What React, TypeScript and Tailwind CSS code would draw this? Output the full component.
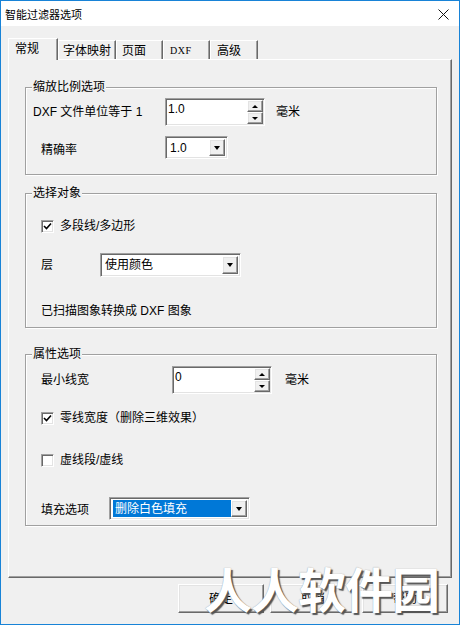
import React from "react";

const sunken =
  "bg-white border border-t-[#a0a0a0] border-l-[#a0a0a0] border-r-white border-b-white shadow-[inset_1px_1px_0_#696969,inset_-1px_-1px_0_#e3e3e3]";
const raised =
  "bg-[#f0f0f0] border border-t-white border-l-white border-r-[#696969] border-b-[#696969] shadow-[inset_-1px_-1px_0_#a0a0a0,inset_1px_1px_0_#e3e3e3]";

function DownTri() {
  return (
    <div className="w-0 h-0 border-l-[3.5px] border-r-[3.5px] border-t-[4px] border-l-transparent border-r-transparent border-t-black" />
  );
}
function UpTri() {
  return (
    <div className="w-0 h-0 border-l-[3px] border-r-[3px] border-b-[3px] border-l-transparent border-r-transparent border-b-black" />
  );
}
function SmallDownTri() {
  return (
    <div className="w-0 h-0 border-l-[3px] border-r-[3px] border-t-[3px] border-l-transparent border-r-transparent border-t-black" />
  );
}

function Spin({ value, w }: { value: string; w: string }) {
  return (
    <div className={`${sunken} ${w} h-[28px] flex`}>
      <div className="flex-1 pl-[2px] pt-[3px] leading-[14px]">{value}</div>
      <div className="w-[17px] flex flex-col p-[1px] pl-0">
        <div className={`${raised} flex-1 flex items-center justify-center`}>
          <UpTri />
        </div>
        <div className={`${raised} flex-1 flex items-center justify-center`}>
          <SmallDownTri />
        </div>
      </div>
    </div>
  );
}

function Combo({
  value,
  w,
  h,
  selected,
}: {
  value: string;
  w: string;
  h: string;
  selected?: boolean;
}) {
  return (
    <div className={`${sunken} ${w} ${h} flex p-[2px]`}>
      <div className="flex-1 flex items-center pl-[1px]">
        {selected ? (
          <div className="w-full h-full bg-[#0078d7] text-white flex items-center pl-[2px]">
            {value}
          </div>
        ) : (
          <div className="pl-[1px]">{value}</div>
        )}
      </div>
      <div className={`${raised} w-[16px] flex items-center justify-center`}>
        <DownTri />
      </div>
    </div>
  );
}

function Check({ checked }: { checked?: boolean }) {
  return (
    <div className={`${sunken} w-[13px] h-[13px] flex items-center justify-center`}>
      {checked && (
        <svg width="9" height="9" viewBox="0 0 9 9">
          <path d="M1 4 L3.5 6.5 L8 1.5" stroke="#000" strokeWidth="1.6" fill="none" />
        </svg>
      )}
    </div>
  );
}

function Group({
  title,
  h,
  mt,
  children,
}: {
  title: string;
  h: string;
  mt: string;
  children: React.ReactNode;
}) {
  return (
    <div
      className={`relative ${mt} ml-[16px] w-[412px] ${h} border border-[#a0a0a0] shadow-[inset_1px_1px_0_#fff,1px_1px_0_#fff]`}
    >
      <div className="absolute left-[6px] top-[-8px] bg-[#f0f0f0] px-[1px] leading-[14px]">
        {title}
      </div>
      {children}
    </div>
  );
}

function Tab({
  label,
  w,
  active,
  pl,
  cls,
}: {
  label: string;
  w: string;
  active?: boolean;
  pl: string;
  cls?: string;
}) {
  if (active) {
    return (
      <div
        className={`relative z-10 ${w} h-[22px] -mb-[1px] bg-[#f0f0f0] border-t border-l border-white border-r border-r-[#696969] shadow-[inset_-1px_0_0_#a0a0a0] ${pl} pt-[3px] leading-[14px]`}
      >
        {label}
      </div>
    );
  }
  return (
    <div
      className={`${w} h-[19px] bg-[#f0f0f0] border-t border-l border-white border-r border-r-[#696969] shadow-[inset_-1px_0_0_#a0a0a0] ${pl} pt-[3px] leading-[14px] ${cls ?? ""}`}
    >
      {label}
    </div>
  );
}

function Button({ label }: { label: string }) {
  return (
    <div
      className={`${raised} w-[86px] h-[29px] flex items-center justify-center`}
    >
      {label}
    </div>
  );
}

export default function App() {
  return (
    <div className="relative w-[460px] h-[625px] border border-[#1883d7] bg-[#f0f0f0] flex flex-col font-['Liberation_Sans','Noto_Sans_CJK_SC',sans-serif] text-[12px] text-black overflow-hidden">
      {/* Title bar */}
      <div className="h-[25px] bg-white flex items-center pl-[4px] pr-[10px] justify-between">
        <div className="text-[11px] leading-[14px] pt-[2px]">智能过滤器选项</div>
        <svg width="11" height="11" viewBox="0 0 11 11" className="mt-[1px]">
          <path d="M0.5 0.5 L10.5 10.5 M10.5 0.5 L0.5 10.5" stroke="#111" strokeWidth="1" />
        </svg>
      </div>

      {/* Body */}
      <div className="flex-1 pl-[7px] flex flex-col">
        {/* Tabs */}
        <div className="mt-[12px] flex items-end h-[21px]">
          <Tab label="常规" w="w-[50px]" active pl="pl-[6px]" />
          <Tab label="字体映射" w="w-[58px]" pl="pl-[4px]" />
          <Tab label="页面" w="w-[47px]" pl="pl-[5px]" />
          <Tab
            label="DXF"
            w="w-[47px]"
            pl="pl-[6px]"
            cls="font-['Liberation_Serif',serif] text-[10px] tracking-[0.5px]"
          />
          <Tab label="高级" w="w-[48px]" pl="pl-[6px]" />
        </div>

        {/* Panel */}
        <div className="w-[444px] h-[519px] border-t border-l border-white border-r border-b border-r-[#696969] border-b-[#696969] shadow-[inset_-1px_-1px_0_#a0a0a0] flex flex-col">
          <Group title="缩放比例选项" h="h-[88px]" mt="mt-[27px]">
            <div className="mt-[10px] pl-[7px] flex items-center">
              <div className="w-[132px]">DXF 文件单位等于 1</div>
              <Spin value="1.0" w="w-[100px]" />
              <div className="ml-[11px]">毫米</div>
            </div>
            <div className="mt-[10px] pl-[15px] flex items-center">
              <div className="w-[124px] mt-[4px]">精确率</div>
              <Combo value="1.0" w="w-[63px]" h="h-[23px]" />
            </div>
          </Group>

          <Group title="选择对象" h="h-[135px]" mt="mt-[18px]">
            <div className="mt-[23px] pl-[15px] flex items-center">
              <Check checked />
              <div className="ml-[6px]">多段线/多边形</div>
            </div>
            <div className="mt-[18px] pl-[15px] flex items-center">
              <div className="w-[59px]">层</div>
              <Combo value="使用颜色" w="w-[141px]" h="h-[24px]" />
            </div>
            <div className="mt-[27px] pl-[15px] leading-[14px]">
              已扫描图象转换成 DXF 图象
            </div>
          </Group>

          <Group title="属性选项" h="h-[172px]" mt="mt-[26px]">
            <div className="mt-[11px] pl-[15px] flex items-center">
              <div className="w-[131px]">最小线宽</div>
              <Spin value="0" w="w-[100px]" />
              <div className="ml-[13px]">毫米</div>
            </div>
            <div className="mt-[15px] pl-[15px] flex items-center">
              <Check checked />
              <div className="ml-[6px]">零线宽度（删除三维效果）</div>
            </div>
            <div className="mt-[24px] pl-[15px] flex items-center">
              <Check />
              <div className="ml-[6px]">虚线段/虚线</div>
            </div>
            <div className="mt-[28px] pl-[15px] flex items-center">
              <div className="w-[68px] mt-[2px]">填充选项</div>
              <Combo value="删除白色填充" w="w-[141px]" h="h-[23px]" selected />
            </div>
          </Group>
        </div>

        {/* Buttons */}
        <div className="w-[444px] mt-[6px] flex justify-end gap-[6px] pr-[4px]">
          <Button label="确定" />
          <Button label="取消" />
          <Button label="帮助" />
        </div>
      </div>

      {/* Watermark overlay */}
      <div className="absolute left-[203px] top-[556px] text-[48px] leading-[60px] font-bold text-white tracking-[-1px] [text-shadow:2px_2px_1px_#555,0_0_1px_#888] font-['Noto_Sans_CJK_SC',sans-serif]">
        人人软件园
      </div>
    </div>
  );
}
